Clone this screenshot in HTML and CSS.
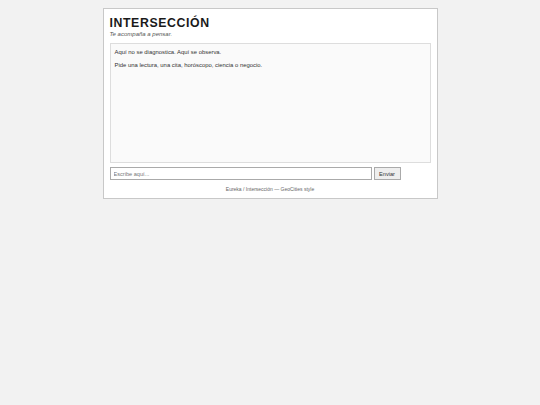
FILE: index.html
```html
<!DOCTYPE html>
<html lang="es">
<head>
<meta charset="utf-8">
<title>Intersección</title>
<link rel="stylesheet" href="styles.css">
</head>
<body>
<div class="page">
  <h1 class="title">INTERSECCIÓN</h1>
  <p class="tagline">Te acompaña a pensar.</p>
  <div class="chat">
    <p class="msg">Aquí no se diagnostica. Aquí se observa.</p>
    <p class="msg">Pide una lectura, una cita, horóscopo, ciencia o negocio.</p>
  </div>
  <form class="composer">
    <input class="field" type="text" placeholder="Escribe aquí...">
    <button class="send" type="button">Enviar</button>
  </form>
  <p class="footer">Eureka / Intersección — GeoCities style</p>
</div>
</body>
</html>
```
FILE: styles.css
```css
html, body {
  margin: 0;
  padding: 0;
  background: #f2f2f2;
}
body {
  font-family: "Liberation Sans", Arial, sans-serif;
  color: #222;
  padding-top: 8px;
}
.page {
  width: 321px;
  margin: 0 auto;
  background: #fff;
  border: 1px solid #c8c8c8;
  padding: 8px 6px 6px 6px;
}
.title {
  margin: 0;
  font-size: 12.3px;
  font-weight: bold;
  letter-spacing: 0.6px;
  line-height: 12px;
  color: #1a1a1a;
}
.tagline {
  margin: 1px 0 0 0;
  font-size: 6px;
  font-style: italic;
  line-height: 8px;
  color: #555;
}
.chat {
  margin-top: 5px;
  height: 114px;
  border: 1px solid #ddd;
  background: #fafafa;
  padding: 4px 4px 0 4px;
}
.msg {
  margin: 0 0 5px 0;
  font-size: 5.9px;
  line-height: 8px;
  color: #333;
}
.composer {
  display: flex;
  gap: 2px;
  margin: 4px 0 0 0;
}
.field {
  width: 262px;
  height: 13px;
  box-sizing: border-box;
  border: 1px solid #aaa;
  font-family: inherit;
  font-size: 5.6px;
  padding: 0 3px;
  margin: 0;
  color: #333;
}
.field::placeholder { color: #777; }
.send {
  width: 27px;
  height: 13px;
  box-sizing: border-box;
  border: 1px solid #aaa;
  background: #eee;
  font-family: inherit;
  font-size: 5.6px;
  padding: 0;
  margin: 0;
  color: #333;
}
.footer {
  margin: 6px 0 0 0;
  text-align: center;
  font-size: 5px;
  line-height: 6px;
  color: #666;
}
```
